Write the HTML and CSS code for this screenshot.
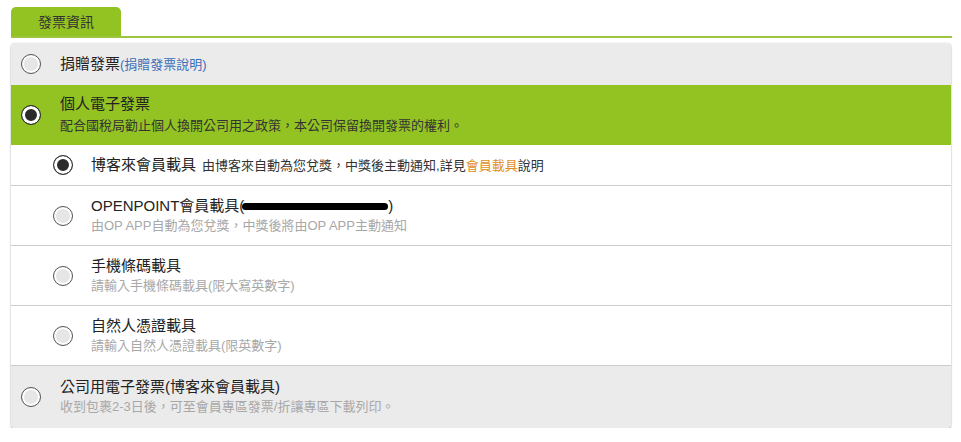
FILE: index.html
```html
<!DOCTYPE html>
<html lang="zh-Hant">
<head>
  <meta charset="UTF-8" />
  <meta name="viewport" content="width=device-width, initial-scale=1.0" />
  <title>發票資訊</title>
  <link rel="stylesheet" href="styles.css">
</head>
<body>
  <div class="tabs">
    <span class="tab">發票資訊</span>
  </div>

  <div class="card">
    <!-- 捐贈 -->
    <div class="opt opt-gray opt-single">
      <span class="radio"></span>
      <div class="opt-text">
        <span class="title">捐贈發票</span><a href="#" class="help">(捐贈發票說明)</a>
      </div>
    </div>

    <!-- 個人電子發票 -->
    <div class="opt opt-green">
      <span class="radio checked"></span>
      <div class="opt-text">
        <div class="title">個人電子發票</div>
        <div class="sub">配合國稅局勸止個人換開公司用之政策，本公司保留換開發票的權利。</div>
      </div>
    </div>

    <div class="opt opt-child opt-single">
      <span class="radio checked"></span>
      <div class="opt-text">
        <span class="title">博客來會員載具</span>
        <span class="note">由博客來自動為您兌獎，中獎後主動通知,詳見<a href="#" class="orange">會員載具</a>說明</span>
      </div>
    </div>

    <div class="opt opt-child">
      <span class="radio"></span>
      <div class="opt-text">
        <div class="title">OPENPOINT會員載具(<span class="redact"></span>)</div>
        <div class="sub muted">由OP APP自動為您兌獎，中獎後將由OP APP主動通知</div>
      </div>
    </div>

    <div class="opt opt-child">
      <span class="radio"></span>
      <div class="opt-text">
        <div class="title">手機條碼載具</div>
        <div class="sub muted">請輸入手機條碼載具(限大寫英數字)</div>
      </div>
    </div>

    <div class="opt opt-child">
      <span class="radio"></span>
      <div class="opt-text">
        <div class="title">自然人憑證載具</div>
        <div class="sub muted">請輸入自然人憑證載具(限英數字)</div>
      </div>
    </div>

    <!-- 公司用 -->
    <div class="opt opt-gray opt-last">
      <span class="radio"></span>
      <div class="opt-text">
        <div class="title">公司用電子發票(博客來會員載具)</div>
        <div class="sub muted">收到包裹2-3日後，可至會員專區發票/折讓專區下載列印。</div>
      </div>
    </div>
  </div>
</body>
</html>
```

FILE: styles.css
```css
:root {
  --verde: #93c322;
  --verde-linea: #9cc43c;
  --gris-fila: #ebebeb;
  --borde: #cccccc;
  --texto: #222;
  --gris-texto: #a8a8a8;
}

body {
  margin: 0;
  padding: 7px 9px 0 11px;
  background: #fff;
  color: var(--texto);
  font-family: "Liberation Sans", "Noto Sans CJK TC", sans-serif;
}

.tabs {
  display: flex;
  border-bottom: 2px solid var(--verde-linea);
}

.tab {
  width: 110px;
  height: 29px;
  line-height: 30px;
  text-align: center;
  font-size: 14px;
  color: #333;
  background: var(--verde);
  border-radius: 5px 5px 0 0;
}

.card {
  margin-top: 5px;
  width: 940px;
  border-radius: 4px;
  overflow: hidden;
  box-shadow: 0 1px 2px rgba(0, 0, 0, 0.35), 0 0 1px rgba(0, 0, 0, 0.2);
}

.opt {
  display: flex;
  align-items: center;
  height: 60px;
  padding-left: 10px;
  background: #fff;
  border-bottom: 1px solid var(--borde);
  box-sizing: border-box;
}

.opt-single {
  height: 41px;
}

.opt-gray {
  background: var(--gris-fila);
}

.opt-green {
  background: var(--verde);
  border-bottom: none;
}

.opt-gray.opt-single {
  height: 42px;
  border-bottom: none;
}

.opt-last {
  height: 62px;
  border-bottom: none;
}

.opt-child {
  padding-left: 42px;
}

.radio {
  flex: none;
  width: 20px;
  height: 20px;
  box-sizing: border-box;
  border: 1px solid #555;
  border-radius: 50%;
  background: #e6e6e6;
  box-shadow: inset 0 0 0 2px #fff;
  margin-right: 19px;
}

.opt-child .radio {
  margin-right: 18px;
}

.radio.checked {
  border-color: #333;
  background: #2b2b2b;
  box-shadow: inset 0 0 0 3px #fff;
}

.opt-text {
  display: flex;
  flex-direction: column;
}

.opt-single .opt-text {
  flex-direction: row;
  align-items: baseline;
}

.title {
  font-size: 15px;
  line-height: 20px;
  color: var(--texto);
}

.opt-green .title,
.opt-green .sub {
  line-height: 22px;
}

.sub {
  font-size: 13px;
  line-height: 20px;
  color: #333;
}

.sub.muted {
  color: var(--gris-texto);
}

.help {
  font-size: 13px;
  color: #3b6fb8;
  text-decoration: none;
}

.note {
  font-size: 13px;
  color: #333;
  margin-left: 6px;
}

.orange {
  color: #e0901a;
  text-decoration: none;
}

.redact {
  display: inline-block;
  width: 146px;
  height: 7px;
  background: #000;
  border-radius: 4px;
  vertical-align: middle;
  margin-left: -2px;
}
```
